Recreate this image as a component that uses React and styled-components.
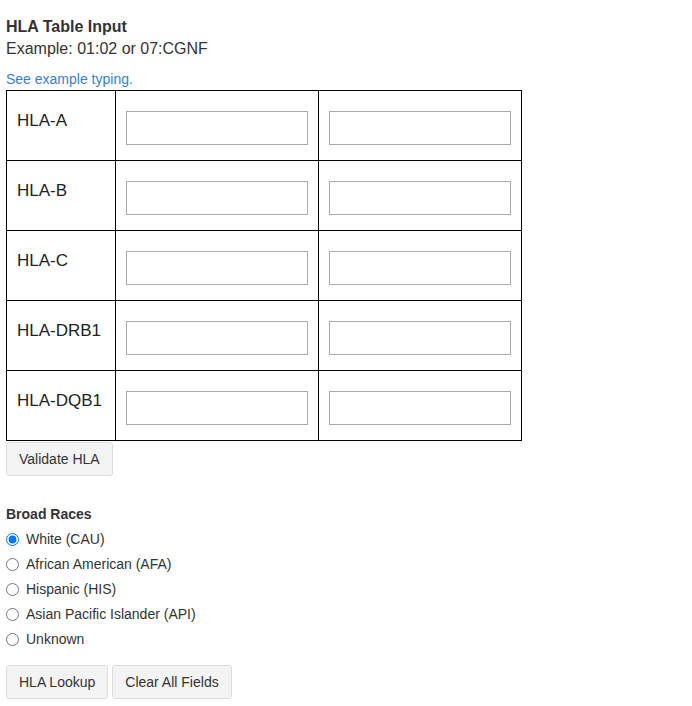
import React, { useState } from 'react';
import styled, { createGlobalStyle } from 'styled-components';

const GlobalStyle = createGlobalStyle`
    body {
        margin: 0;
        background: #fff;
        color: #333;
        font-family: "Liberation Sans", Arial, sans-serif;
    }
`

const Page = styled.div`
    padding: 15px 6px 8px 6px;
`

const Title = styled.div`
    font-size: 16px;
    font-weight: bold;
    line-height: 23px;
`

const Example = styled.div`
    font-size: 16px;
    line-height: 22px;
`

const Link = styled.a`
    display: block;
    margin-top: 9px;
    font-size: 14px;
    line-height: 20px;
    color: #3a7fc9;
    text-decoration: none;
`

const Table = styled.table`
    margin-top: 1px;
    border-collapse: collapse;
    border: 1px solid #000;
`

const LabelCell = styled.td`
    width: 88px;
    height: 48px;
    padding: 20px 10px 0 10px;
    border: 1px solid #000;
    vertical-align: top;
    font-size: 17px;
    line-height: 20px;
    color: #222;
`

const InputCell = styled.td`
    width: 182px;
    padding: 20px 10px 15px 10px;
    border: 1px solid #000;
    vertical-align: top;
`

const AlleleInput = styled.input`
    display: block;
    box-sizing: border-box;
    width: 182px;
    height: 34px;
    margin: 0;
    border: 1px solid #aaa;
    font-family: "Liberation Sans", Arial, sans-serif;
    font-size: 14px;
    padding: 4px 6px;
`

const Button = styled.button`
    box-sizing: border-box;
    height: 34px;
    padding: 6px 12px;
    font-family: "Liberation Sans", Arial, sans-serif;
    font-size: 14px;
    line-height: 20px;
    color: #333;
    background: #f4f4f4;
    border: 1px solid #ddd;
    border-radius: 3px;
    cursor: pointer;
`

const ValidateRow = styled.div`
    margin-top: 1px;
`

const SectionTitle = styled.div`
    margin-top: 28px;
    font-size: 14px;
    font-weight: bold;
    line-height: 20px;
`

const RadioList = styled.div`
    display: flex;
    flex-direction: column;
    gap: 5px;
    margin-top: 5px;
`

const RadioLabel = styled.label`
    display: flex;
    align-items: center;
    gap: 7px;
    font-size: 14px;
    line-height: 20px;
    color: #333;

    input {
        width: 13px;
        height: 13px;
        margin: 0;
    }
`

const ButtonRow = styled.div`
    display: flex;
    gap: 4px;
    margin-top: 16px;
`

const loci = ['HLA-A', 'HLA-B', 'HLA-C', 'HLA-DRB1', 'HLA-DQB1'];

const races = [
    { code: 'CAU', label: 'White (CAU)' },
    { code: 'AFA', label: 'African American (AFA)' },
    { code: 'HIS', label: 'Hispanic (HIS)' },
    { code: 'API', label: 'Asian Pacific Islander (API)' },
    { code: 'UNK', label: 'Unknown' },
];

export default function App() {
    const [race, setRace] = useState('CAU');

    return (
        <Page>
            <GlobalStyle />
            <Title>HLA Table Input</Title>
            <Example>Example: 01:02 or 07:CGNF</Example>
            <Link href="#">See example typing.</Link>
            <Table>
                <tbody>
                    {loci.map((locus) => (
                        <tr key={locus}>
                            <LabelCell>{locus}</LabelCell>
                            <InputCell><AlleleInput type="text" /></InputCell>
                            <InputCell><AlleleInput type="text" /></InputCell>
                        </tr>
                    ))}
                </tbody>
            </Table>
            <ValidateRow>
                <Button>Validate HLA</Button>
            </ValidateRow>
            <SectionTitle>Broad Races</SectionTitle>
            <RadioList>
                {races.map((r) => (
                    <RadioLabel key={r.code}>
                        <input
                            type="radio"
                            name="race"
                            checked={race === r.code}
                            onChange={() => setRace(r.code)}
                        />
                        {r.label}
                    </RadioLabel>
                ))}
            </RadioList>
            <ButtonRow>
                <Button>HLA Lookup</Button>
                <Button>Clear All Fields</Button>
            </ButtonRow>
        </Page>
    );
}
